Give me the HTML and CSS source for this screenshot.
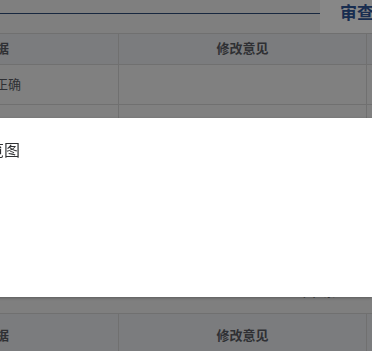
FILE: index.html
```html
<!DOCTYPE html>
<html lang="zh-CN">
<head>
    <meta charset="UTF-8">
    <meta name="viewport" content="width=device-width, initial-scale=1.0">
    <title>审查</title>
    <link rel="stylesheet" href="styles.css">
</head>
<body>
    <div class="page">
        <div class="head">
            <div class="head-line"></div>
            <div class="head-tab"><span>审查结果</span></div>
        </div>
        <table class="grid">
            <tr>
                <th class="c1">审查依据</th>
                <th class="c2">修改意见</th>
                <th class="c3">操作</th>
            </tr>
            <tr>
                <td class="c1">计算书正确</td>
                <td class="c2"></td>
                <td class="c3"></td>
            </tr>
            <tr>
                <td class="c1">图纸正确</td>
                <td class="c2"></td>
                <td class="c3"></td>
            </tr>
        </table>
        <div class="pager">共2条</div>
        <table class="grid grid-next">
            <tr>
                <th class="c1">审查依据</th>
                <th class="c2">修改意见</th>
                <th class="c3">操作</th>
            </tr>
        </table>
    </div>

    <div class="mask"></div>
    <div class="dialog">
        <div class="dialog-title">预览图</div>
    </div>
</body>
</html>
```

FILE: styles.css
```css
*{
    margin: 0;
    padding: 0;
    box-sizing: border-box;
}
body{
    width: 372px;
    height: 351px;
    overflow: hidden;
    background: #f0f0f0;
    font-family: "Noto Sans CJK SC", "Noto Sans", sans-serif;
}
.page{
    margin-left: -60px;
    width: 560px;
}
.head{
    display: flex;
    height: 33px;
}
.head-line{
    width: 380px;
    height: 14px;
    border-bottom: 1.5px solid #2c4a78;
}
.head-tab{
    flex: 1;
    background: #ffffff;
    padding-left: 20px;
}
.head-tab span{
    display: block;
    font-size: 17px;
    font-weight: bold;
    line-height: 24px;
    color: #2f5597;
}
.grid{
    border-collapse: collapse;
    width: 560px;
    table-layout: fixed;
}
.grid th,
.grid td{
    border: 1px solid #d3d3d3;
    font-size: 13px;
    color: #5a5c62;
}
.grid th{
    height: 31px;
    padding-bottom: 4px;
    background: #e8eaee;
    font-weight: bold;
}
.grid td{
    height: 40px;
    padding-bottom: 3px;
    background: #f2f2f2;
}
.grid .c1{
    width: 178px;
    text-align: left;
    padding-left: 15px;
}
.grid th.c1{
    padding-left: 16px;
}
.grid .c2{
    width: 248px;
    text-align: center;
}
.grid-next th{
    height: 40px;
    padding-bottom: 0;
    padding-top: 1px;
}
.pager{
    padding: 138px 164px 14px 0;
    text-align: right;
    font-size: 13px;
    line-height: 16px;
    color: #5a5c62;
}
.mask{
    position: fixed;
    top: 0;
    left: 0;
    right: 0;
    bottom: 0;
    background: rgba(0, 0, 0, 0.47);
}
.dialog{
    position: fixed;
    top: 118px;
    left: -48px;
    right: 0;
    height: 179px;
    background: #fff;
    box-shadow: 0 1px 3px rgba(0, 0, 0, 0.3);
    padding: 19px 20px;
}
.dialog-title{
    font-size: 16px;
    line-height: 24px;
    color: #303133;
}
```
